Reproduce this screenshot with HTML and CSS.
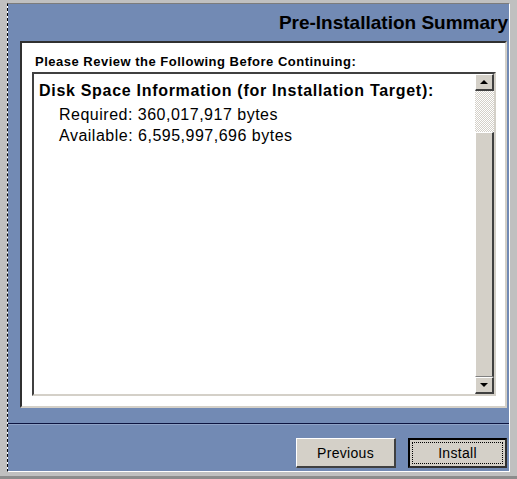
FILE: index.html
```html
<!DOCTYPE html>
<html lang="en">
<head>
    <title>Pre-Installation Summary</title>
    <link rel="stylesheet" href="styles.css">
</head>
<body>
    <div class="window">
        <div class="edge">
            <div class="frame">
                <div class="header">Pre-Installation Summary</div>
                <div class="panel">
                    <div class="intro">Please Review the Following Before Continuing:</div>
                    <div class="listbox">
                        <div class="content">
                            <div class="heading">Disk Space Information (for Installation Target):</div>
                            <div class="line">Required: 360,017,917 bytes</div>
                            <div class="line">Available: 6,595,997,696 bytes</div>
                        </div>
                        <div class="scrollbar">
                            <div class="sbtn"><span class="arrow up"></span></div>
                            <div class="track"></div>
                            <div class="thumb"></div>
                            <div class="sbtn"><span class="arrow down"></span></div>
                        </div>
                    </div>
                </div>
                <div class="separator"></div>
                <div class="footer">
                    <button class="btn">Previous</button>
                    <button class="btn default"><span class="focus">Install</span></button>
                </div>
            </div>
        </div>
    </div>
</body>
</html>
```

FILE: styles.css
```css
body {
    margin: 0;
    font-family: "Liberation Sans", Arial, sans-serif;
}

.window {
    width: 517px;
    height: 479px;
    box-sizing: border-box;
    background-color: #c0c0c0;
    padding: 3px 7px 4px 7px;
    border-bottom: 3px solid #8c8c8c;
    display: flex;
}

.edge {
    flex: 1;
    display: flex;
    background-color: #ffffff;
}

.frame {
    flex: 1;
    display: flex;
    flex-direction: column;
    background-color: #728ab4;
    background-clip: padding-box;
    border-top: 1px solid #7c7c7c;
    border-left: 1px dashed #000000;
    border-right: 1px solid #ffffff;
    border-bottom: 1px solid #ffffff;
}

.header {
    height: 37px;
    line-height: 37px;
    text-align: right;
    padding-right: 1px;
    font-size: 19px;
    font-weight: bold;
    color: #000000;
}

.panel {
    height: 367px;
    box-sizing: border-box;
    margin: 0 2px 0 12px;
    background-color: #ffffff;
    border-top: 2px solid #303030;
    border-left: 2px solid #303030;
    border-right: 2px solid #d4d0c8;
    border-bottom: 2px solid #d4d0c8;
    display: flex;
    flex-direction: column;
}

.intro {
    font-size: 13px;
    font-weight: bold;
    letter-spacing: 0.5px;
    line-height: 15px;
    padding: 11px 0 0 13px;
    height: 18px;
}

.listbox {
    margin: 0 9px 0 10px;
    height: 324px;
    box-sizing: border-box;
    border-top: 2px solid #404040;
    border-left: 2px solid #404040;
    border-right: 2px solid #d4d0c8;
    border-bottom: 2px solid #d4d0c8;
    display: flex;
}

.content {
    flex: 1;
    padding: 3px 0 0 5px;
}

.heading {
    font-size: 16px;
    font-weight: bold;
    line-height: 27px;
    letter-spacing: 0.7px;
}

.line {
    font-size: 16px;
    line-height: 21px;
    letter-spacing: 0.5px;
    padding-left: 20px;
}

.scrollbar {
    width: 19px;
    display: flex;
    flex-direction: column;
}

.sbtn {
    height: 17px;
    box-sizing: border-box;
    background-color: #d4d0c8;
    border-top: 1px solid #ffffff;
    border-left: 1px solid #ffffff;
    border-right: 2px solid #404040;
    border-bottom: 2px solid #404040;
    display: flex;
    align-items: center;
    justify-content: center;
}

.arrow {
    width: 0;
    height: 0;
    border-left: 4px solid transparent;
    border-right: 4px solid transparent;
}

.arrow.up {
    border-bottom: 4px solid #000000;
}

.arrow.down {
    border-top: 4px solid #000000;
}

.track {
    height: 41px;
    background-color: #ffffff;
    background-image: repeating-conic-gradient(#d4d0c8 0 25%, #ffffff 0 50%);
    background-size: 2px 2px;
}

.thumb {
    flex: 1;
    box-sizing: border-box;
    background-color: #d4d0c8;
    border-top: 1px solid #ffffff;
    border-left: 1px solid #ffffff;
    border-right: 2px solid #404040;
    border-bottom: 1px solid #808080;
}

.separator {
    margin-top: 15px;
    border-top: 1px solid #0c1440;
    border-bottom: 1px solid #8ea2c6;
}

.footer {
    display: flex;
    justify-content: flex-end;
    gap: 12px;
    padding: 13px 2px 0 0;
}

.btn {
    width: 100px;
    height: 30px;
    box-sizing: border-box;
    font-family: "Liberation Sans", Arial, sans-serif;
    font-size: 14px;
    letter-spacing: 0.3px;
    color: #000000;
    background-color: #d4d0c8;
    border-top: 1px solid #ffffff;
    border-left: 1px solid #ffffff;
    border-right: 2px solid #404040;
    border-bottom: 2px solid #404040;
    padding: 0;
}

.btn.default {
    width: 99px;
    border: 2px solid #000000;
    border-right-color: #303030;
    border-bottom-color: #303030;
    padding: 2px;
    display: flex;
}

.focus {
    flex: 1;
    display: flex;
    align-items: center;
    justify-content: center;
    border: 1px dotted #000000;
}
```
